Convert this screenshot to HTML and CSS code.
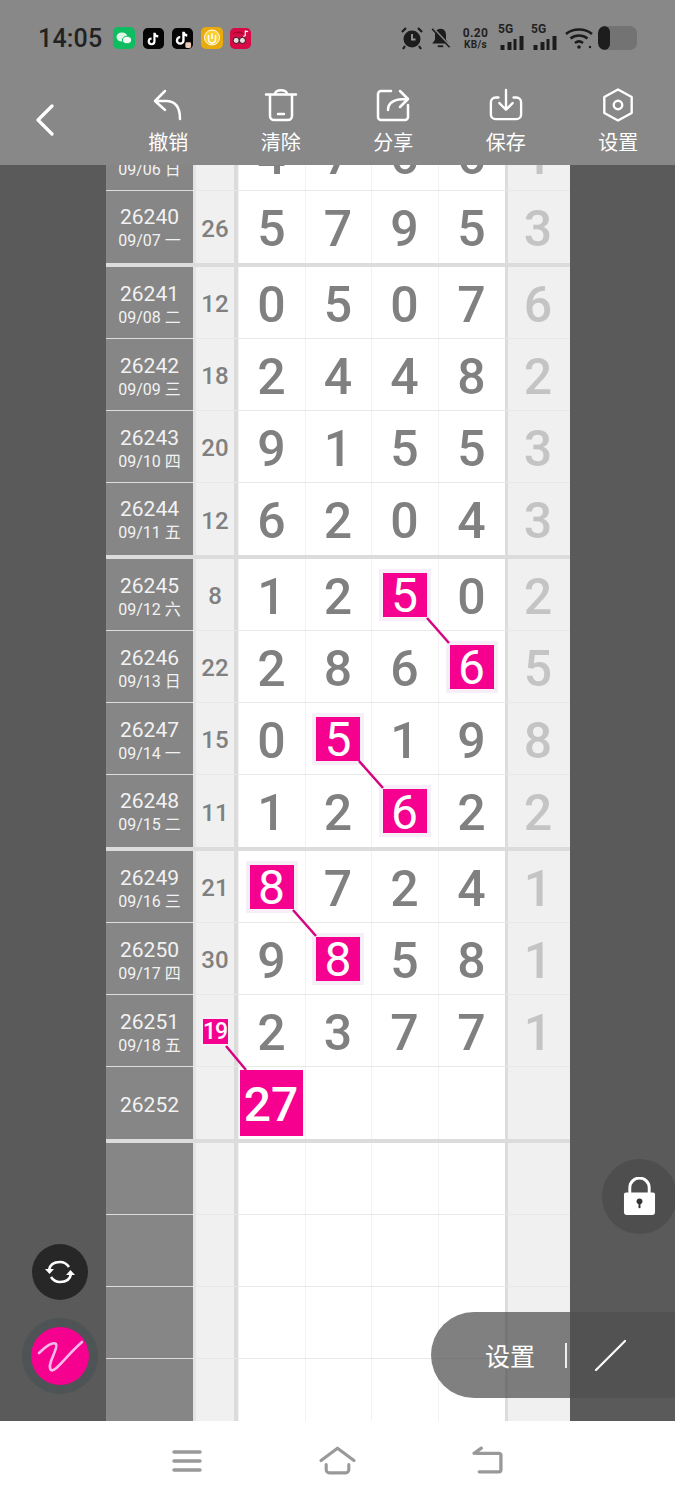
FILE: index.html
```html
<!DOCTYPE html>
<html lang="zh">
<head>
<meta charset="utf-8">
<title>走势图</title>
<link rel="stylesheet" href="styles.css">
</head>
<body>
<div class="page">
  <header class="head">
    <div class="status">
      <span class="time">14:05</span>
      <div class="apps">
        <svg class="app a-wx" viewBox="0 0 22 22"><rect width="22" height="22" rx="5" fill="#0fbd61"/><ellipse cx="9" cy="10" rx="5.500" ry="4.600" fill="#dff5e6"/><ellipse cx="14" cy="13" rx="4.600" ry="3.800" fill="#f4fbf6" stroke="#0fbd61"/></svg>
        <svg class="app a-tt" viewBox="0 0 22 22"><rect width="22" height="22" rx="5" fill="#050505"/><path d="M12 5v9a3 3 0 1 1-3-3M12 5c.3 2.400 1.800 3.600 4 3.800" fill="none" stroke="#fff" stroke-width="2.300"/></svg>
        <svg class="app a-tt2" viewBox="0 0 22 22"><rect width="22" height="22" rx="5" fill="#050505"/><path d="M12 4v9a3.400 3.400 0 1 1-3.400-3.400M12 4c.3 2.400 1.800 3.600 4 3.800" fill="none" stroke="#fff" stroke-width="2.500"/><rect x="14" y="15" width="6" height="6" rx="1.500" fill="#ecc8b8"/></svg>
        <svg class="app a-ye" viewBox="0 0 22 22"><rect width="22" height="22" rx="5" fill="#e9ab0c"/><circle cx="11" cy="10.500" r="7.500" fill="#fbcf2e" stroke="#fff" stroke-width="1"/><path d="M7.500 8v4.500a3.500 3.500 0 0 0 7 0V8M11 6.500V12" fill="none" stroke="#fff" stroke-width="1.600"/></svg>
        <svg class="app a-re" viewBox="0 0 22 22"><rect width="22" height="22" rx="5" fill="#d80a45"/><path d="M3 6c4-2 8-2 11 0" fill="none" stroke="#a0062f" stroke-width="1.500"/><circle cx="6.500" cy="13" r="3.200" fill="#e8dfe0" stroke="#2a0a12"/><circle cx="13" cy="13" r="3.200" fill="#e8dfe0" stroke="#2a0a12"/><path d="M16 3v5l-2 1M16 3l3 1" fill="none" stroke="#fff" stroke-width="1.200"/></svg>
      </div>
      <div class="sys">
        <svg class="s-alarm" viewBox="0 0 24 24"><circle cx="12" cy="13" r="8.500" fill="#1c1c1c"/><path d="M12 8v5.500h3.500" fill="none" stroke="#999" stroke-width="1.800"/><path d="M2 6l4-4M22 6l-4-4M5 20l-2 3M19 20l2 3" stroke="#1c1c1c" stroke-width="2.200"/></svg>
        <svg class="s-bell" viewBox="0 0 22 24"><path d="M11 2c-4 0-6 3-6 7v5l-3 4h18l-3-4V9c0-4-2-7-6-7z" fill="#1c1c1c"/><path d="M8 21h6" stroke="#1c1c1c" stroke-width="2"/><path d="M2 2l19 20" stroke="#1c1c1c" stroke-width="2"/><path d="M4 2l18 19" stroke="#888" stroke-width="1.500"/></svg>
        <div class="speed"><span>0.20</span><span class="unit">KB/s</span></div>
        <div class="net"><span class="g">5G</span><svg viewBox="0 0 26 14"><path d="M2 9h4v5H2zM9 6h4v8H9zM15 3h3v11h-3zM21 0h4v14h-4z" fill="#1c1c1c"/></svg></div>
        <div class="net"><span class="g">5G</span><svg viewBox="0 0 26 14"><path d="M2 9h4v5H2zM9 6h4v8H9zM15 3h3v11h-3zM21 0h4v14h-4z" fill="#1c1c1c"/></svg></div>
        <svg class="s-wifi" viewBox="0 0 28 22"><path d="M1 7c7-6 19-6 26 0M5.500 11.500c5-4 12-4 17 0M10 16c2.500-2 5.500-2 8 0" fill="none" stroke="#1c1c1c" stroke-width="2.600"/><circle cx="14" cy="20" r="1.800" fill="#1c1c1c"/><circle cx="25" cy="20" r="1.200" fill="#1c1c1c"/></svg>
        <div class="batt"><span class="lvl"></span></div>
      </div>
    </div>
    <nav class="tools">
      <svg class="back" viewBox="0 0 20 32"><path d="M17 2L3 16l14 14" fill="none" stroke="#fff" stroke-width="3.200" stroke-linecap="round" stroke-linejoin="round"/></svg>
      <div class="tool"><svg viewBox="0 0 34 34"><path d="M14 3L4 13l10 9M5 13h10c9 0 14 6 14 18" fill="none" stroke="#fff" stroke-width="2.500" stroke-linecap="round" stroke-linejoin="round"/></svg><span>撤销</span></div>
      <div class="tool"><svg viewBox="0 0 34 34"><path d="M2 6.500h30M11 6c0-5 12-5 12 0M6 7v21a4 4 0 0 0 4 4h14a4 4 0 0 0 4-4V7M14 26h6" fill="none" stroke="#fff" stroke-width="2.500" stroke-linecap="round"/></svg><span>清除</span></div>
      <div class="tool"><svg viewBox="0 0 34 34"><path d="M15 3H5a3 3 0 0 0-3 3v23a3 3 0 0 0 3 3h24a3 3 0 0 0 3-3V17M12 22c0-7 5-11 18-11M24 3l8 8-8 8" fill="none" stroke="#fff" stroke-width="2.500" stroke-linecap="round" stroke-linejoin="round"/></svg><span>分享</span></div>
      <div class="tool"><svg viewBox="0 0 36 34"><path d="M10 9H7a5 5 0 0 0-5 5v13a5 5 0 0 0 5 5h22a5 5 0 0 0 5-5V14a5 5 0 0 0-5-5h-3M18 1v20M11 15l7 7 7-7" fill="none" stroke="#fff" stroke-width="2.500" stroke-linecap="round" stroke-linejoin="round"/></svg><span>保存</span></div>
      <div class="tool"><svg viewBox="0 0 34 36"><path d="M17 1.500l14.500 8v17L17 34.500l-14.500-8v-17z" fill="none" stroke="#fff" stroke-width="2.500" stroke-linejoin="round"/><circle cx="17" cy="18" r="4.500" fill="none" stroke="#fff" stroke-width="2.500"/></svg><span>设置</span></div>
    </nav>
  </header>

  <main class="main">
    <div class="sheet">
      <div class="row"><div class="date"><b>26239</b><span>09/06 日</span></div><div class="sum">23</div><div class="d">4</div><div class="d">7</div><div class="d">6</div><div class="d">6</div><div class="e">1</div></div>
      <div class="row end"><div class="date"><b>26240</b><span>09/07 一</span></div><div class="sum">26</div><div class="d">5</div><div class="d">7</div><div class="d">9</div><div class="d">5</div><div class="e">3</div></div>

      <div class="row"><div class="date"><b>26241</b><span>09/08 二</span></div><div class="sum">12</div><div class="d">0</div><div class="d">5</div><div class="d">0</div><div class="d">7</div><div class="e">6</div></div>
      <div class="row"><div class="date"><b>26242</b><span>09/09 三</span></div><div class="sum">18</div><div class="d">2</div><div class="d">4</div><div class="d">4</div><div class="d">8</div><div class="e">2</div></div>
      <div class="row"><div class="date"><b>26243</b><span>09/10 四</span></div><div class="sum">20</div><div class="d">9</div><div class="d">1</div><div class="d">5</div><div class="d">5</div><div class="e">3</div></div>
      <div class="row end"><div class="date"><b>26244</b><span>09/11 五</span></div><div class="sum">12</div><div class="d">6</div><div class="d">2</div><div class="d">0</div><div class="d">4</div><div class="e">3</div></div>

      <div class="row"><div class="date"><b>26245</b><span>09/12 六</span></div><div class="sum">8</div><div class="d">1</div><div class="d">2</div><div class="d"><span class="hit">5</span></div><div class="d">0</div><div class="e">2</div></div>
      <div class="row"><div class="date"><b>26246</b><span>09/13 日</span></div><div class="sum">22</div><div class="d">2</div><div class="d">8</div><div class="d">6</div><div class="d"><span class="hit">6</span></div><div class="e">5</div></div>
      <div class="row"><div class="date"><b>26247</b><span>09/14 一</span></div><div class="sum">15</div><div class="d">0</div><div class="d"><span class="hit">5</span></div><div class="d">1</div><div class="d">9</div><div class="e">8</div></div>
      <div class="row end"><div class="date"><b>26248</b><span>09/15 二</span></div><div class="sum">11</div><div class="d">1</div><div class="d">2</div><div class="d"><span class="hit">6</span></div><div class="d">2</div><div class="e">2</div></div>

      <div class="row"><div class="date"><b>26249</b><span>09/16 三</span></div><div class="sum">21</div><div class="d"><span class="hit">8</span></div><div class="d">7</div><div class="d">2</div><div class="d">4</div><div class="e">1</div></div>
      <div class="row"><div class="date"><b>26250</b><span>09/17 四</span></div><div class="sum">30</div><div class="d">9</div><div class="d"><span class="hit">8</span></div><div class="d">5</div><div class="d">8</div><div class="e">1</div></div>
      <div class="row"><div class="date"><b>26251</b><span>09/18 五</span></div><div class="sum"><span class="hit small">19</span></div><div class="d">2</div><div class="d">3</div><div class="d">7</div><div class="d">7</div><div class="e">1</div></div>
      <div class="row end"><div class="date solo"><b>26252</b></div><div class="sum"></div><div class="d"><span class="hit big">27</span></div><div class="d"></div><div class="d"></div><div class="d"></div><div class="e"></div></div>

      <div class="row"><div class="date"></div><div class="sum"></div><div class="d"></div><div class="d"></div><div class="d"></div><div class="d"></div><div class="e"></div></div>
      <div class="row"><div class="date"></div><div class="sum"></div><div class="d"></div><div class="d"></div><div class="d"></div><div class="d"></div><div class="e"></div></div>
      <div class="row"><div class="date"></div><div class="sum"></div><div class="d"></div><div class="d"></div><div class="d"></div><div class="d"></div><div class="e"></div></div>
      <div class="row"><div class="date"></div><div class="sum"></div><div class="d"></div><div class="d"></div><div class="d"></div><div class="d"></div><div class="e"></div></div>
    </div>

    <svg class="links" viewBox="0 165 675 1256">
      <path d="M427 618L449 643M359 761L383 788M293 910L316 936M226 1046L246 1070" fill="none" stroke="#d4057f" stroke-width="2.500"/>
    </svg>

    <div class="fab sync"><svg viewBox="0 0 30 30"><path d="M4 13c1-6 6-8 11-8 4 0 7 2 9 5M26 17c-1 6-6 8-11 8-4 0-7-2-9-5" fill="none" stroke="#fff" stroke-width="2.600"/><path d="M0 12h9l-4.500 5zM30 18h-9l4.500-5z" fill="#fff"/></svg></div>
    <div class="fab pen"><span class="pen-in"><svg viewBox="0 0 58 58"><path d="M8 26C14 20 22 14 25 17C28 21 15 38 20 43C24 46 34 30 51 15" fill="none" stroke="#f9b9e6" stroke-width="2.600" stroke-linecap="round" stroke-linejoin="round"/></svg></span></div>
    <div class="fab lock"><svg viewBox="0 0 34 40"><path d="M7 18v-7a10 10 0 0 1 20 0v7" fill="none" stroke="#fff" stroke-width="3"/><path d="M3 16h28a2 2 0 0 1 2 2v18a3 3 0 0 1-3 3H4a3 3 0 0 1-3-3V18a2 2 0 0 1 2-2z" fill="#fff"/><circle cx="17" cy="25" r="3" fill="#333"/><path d="M17 26v6" stroke="#333" stroke-width="2"/></svg></div>
    <div class="pill">
      <span class="pill-text">设置</span>
      <i class="pill-sep"></i>
      <svg class="pill-line" viewBox="0 0 32 32"><path d="M2 31L31 2" stroke="#fff" stroke-width="2.200" stroke-linecap="round"/></svg>
    </div>
  </main>

  <footer class="navbar">
    <svg class="n-menu" viewBox="0 0 30 24"><path d="M2 3h26M2 12h26M2 21h26" stroke="#999" stroke-width="3.400" stroke-linecap="round"/></svg>
    <svg class="n-home" viewBox="0 0 36 28"><path d="M2 14L18 2l16 12M7 18v5a3 3 0 0 0 3 3h16a3 3 0 0 0 3-3v-5" fill="none" stroke="#999" stroke-width="3" stroke-linecap="round" stroke-linejoin="round"/></svg>
    <svg class="n-back" viewBox="0 0 32 28"><path d="M5 7h22a2 2 0 0 1 2 2v14a2 2 0 0 1-2 2H8M10 2L3 7" fill="none" stroke="#999" stroke-width="3.200" stroke-linecap="round" stroke-linejoin="round"/></svg>
  </footer>
</div>
</body>
</html>
```
FILE: styles.css
```css
* { box-sizing: border-box; }
html, body { margin: 0; padding: 0; }
body { font-family: Roboto, "Noto Sans CJK SC", sans-serif; background: #fff; }
.page { width: 675px; height: 1500px; display: flex; flex-direction: column; overflow: hidden; }

/* header */
.head { height: 165px; flex: none; background: #888; display: flex; flex-direction: column; }
.status { height: 76px; display: flex; align-items: center; padding: 0 38px 0 38px; }
.time { font-size: 25px; font-weight: 500; color: #222; width: 75px; letter-spacing: .2px; }
.apps { display: flex; align-items: center; gap: 8px; }
.app { width: 21px; height: 21px; display: block; }
.a-wx { width: 22px; height: 22px; }
.a-ye { width: 22px; height: 22px; }
.a-re { margin-left: -1px; }
.sys { margin-left: auto; display: flex; align-items: center; }
.s-alarm { width: 24px; height: 24px; margin-right: 6px; }
.s-bell { width: 21px; height: 22px; margin-right: 9px; }
.speed { display: flex; flex-direction: column; align-items: center; width: 31px; margin-right: 7px; font-size: 12px; line-height: 12px; font-weight: 700; color: #222; letter-spacing: .4px; }
.unit { font-size: 10px; line-height: 11px; }
.net { position: relative; width: 27px; height: 24px; margin-right: 6px; }
.net svg { position: absolute; left: 0; bottom: 0; width: 27px; height: 14px; }
.g { position: absolute; left: 0; top: -3px; font-size: 12px; line-height: 12px; font-weight: 700; color: #222; }
.s-wifi { width: 28px; height: 22px; margin: 0 5px 0 1px; }
.batt { width: 39px; height: 24px; border-radius: 7px; background: #737373; overflow: hidden; }
.lvl { display: block; width: 12px; height: 24px; background: #1d1d1d; border-radius: 6px; }

.tools { flex: 1; position: relative; display: flex; padding-left: 112px; }
.back { position: absolute; left: 35px; top: 28px; width: 20px; height: 32px; }
.tool { width: 112.500px; display: flex; flex-direction: column; align-items: center; color: #fff; font-size: 20px; line-height: 24px; }
.tool svg { width: 34px; height: 34px; margin-top: 12px; margin-bottom: 9px; display: block; }

/* main */
.main { flex: 1; position: relative; overflow: hidden; background: #5a5a5a; padding-left: 106px; }
.sheet { width: 464px; margin-top: -46px; }
.row { display: grid; grid-template-columns: 87px 41px 4px 67px 66px 67px 67px 3px 62px; height: 72px; border-bottom: 1px solid #e8e8e8; background: #fff; }
.row.end { height: 76px; border-bottom: 4px solid #dcdcdc; }
.date { background: #868686; color: #f2f2f2; display: flex; flex-direction: column; align-items: center; justify-content: center; box-shadow: 0 1px 0 #ddd; font-size: 16px; line-height: 21px; padding-top: 4px; }
.end .date { padding-top: 0; }
.end .date.solo { padding-top: 4px; }
.date b { font-weight: 400; font-size: 21px; line-height: 26px; }
.sum { grid-column: 2; border-left: 3px solid #e4e4e4; background: #f0f0f0; color: #808080; font-size: 24px; font-weight: 500; display: flex; align-items: center; justify-content: center; padding-top: 3px; }
.d { color: #808080; font-size: 50px; font-weight: 500; display: flex; align-items: center; justify-content: center; border-left: 1px solid #f2f2f2; padding: 4px 1px 0 0; }
.sum + .d { grid-column: 4; }
.e { grid-column: 9; background: #f0f0f0; color: #c4c4c4; font-size: 50px; font-weight: 500; display: flex; align-items: center; justify-content: center; padding: 4px 2px 0 0; }
.sum, .d, .e { line-height: 1; }
.row::after { content: ""; grid-column: 3; grid-row: 1; background: #dcdcdc; }
.row::before { content: ""; grid-column: 8; grid-row: 1; background: #dcdcdc; }
.hit { width: 44px; height: 44px; margin-top: -4px; padding-top: 3px; background: #f5008f; color: #fff; font-weight: 400; font-size: 48px; display: flex; align-items: center; justify-content: center; box-shadow: 0 0 0 4px #f6eff8; }
.hit.small { width: 25px; height: 25px; margin-top: -2px; padding-top: 1px; font-size: 23px; font-weight: 500; letter-spacing: -1px; box-shadow: 0 0 0 2px #f6eff8; }
.hit.big { width: 63px; height: 66px; margin-left: -1px; font-weight: 500; box-shadow: none; }

.links { position: absolute; left: 0; top: 0; width: 675px; height: 1256px; pointer-events: none; }

/* floats */
.fab { position: absolute; display: flex; align-items: center; justify-content: center; border-radius: 50%; }
.sync { left: 32px; top: 1079px; width: 56px; height: 56px; background: #272727; }
.sync svg { width: 30px; height: 30px; }
.pen { left: 22px; top: 1153px; width: 76px; height: 76px; background: #4e5355; }
.pen-in { width: 58px; height: 58px; border-radius: 50%; background: #f5008f; display: block; }
.pen-in svg { width: 58px; height: 58px; display: block; }
.lock { left: 602px; top: 994px; width: 75px; height: 75px; background: #4e4e4e; }
.lock svg { width: 33px; height: 39px; }
.pill { position: absolute; left: 431px; top: 1147px; width: 244px; height: 86px; background: rgba(79, 79, 79, .72); border-radius: 43px 0 0 43px; display: flex; align-items: center; color: #fff; }
.pill-text { margin-left: 54px; font-size: 25px; width: 80px; }
.pill-sep { width: 2px; height: 25px; background: #eee; }
.pill-line { width: 32px; height: 32px; margin-left: 27px; }

/* nav bar */
.navbar { height: 79px; flex: none; background: #fff; position: relative; }
.navbar svg { position: absolute; }
.n-menu { left: 172px; top: 28px; width: 30px; height: 24px; }
.n-home { left: 319px; top: 25px; width: 37px; height: 29px; }
.n-back { left: 471px; top: 25px; width: 33px; height: 29px; }
```
